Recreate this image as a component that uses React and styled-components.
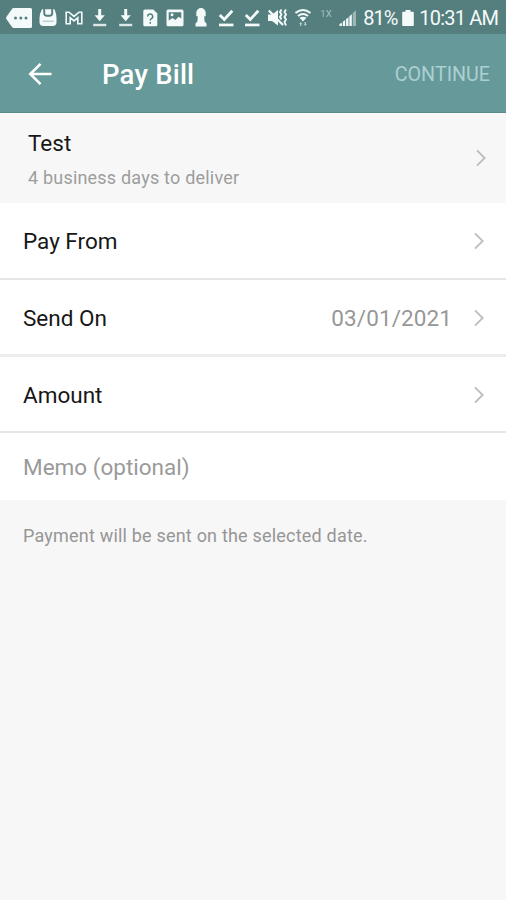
import React from 'react';
import styled, { createGlobalStyle } from 'styled-components';


const GlobalStyle = createGlobalStyle`
  body {
    margin: 0;
    font-family: Roboto, "Liberation Sans", sans-serif;
    background: #f7f7f7;
  }
`;

const Screen = styled("div")`
  display: flex;
  flex-direction: column;
  height: 900px;
  overflow: hidden;
  background: #f7f7f7;
  white-space: nowrap;
`;

const StatusBar = styled("div")`
  display: flex;
  align-items: center;
  box-sizing: border-box;
  height: 34px;
  padding: 1px 0 0 6px;
  color: #f4fafa;
  background: #547f7e;
`;

const Notifications = styled("div")`
  display: flex;
  align-items: center;
  gap: 7.4px;
`;

const Icon = styled("svg")`
  display: block;
  flex: none;
  width: ${(p) => p.$w || 18}px;
  height: ${(p) => p.$h || 20}px;
  margin-left: ${(p) => p.$left || 0}px;
  fill: currentColor;
`;

const Network = styled("span")`
  width: 12px;
  margin: 0 7px 9px 7px;
  font-size: 9.5px;
  line-height: 11px;
  color: #a9c3c3;
`;

const StatusText = styled("span")`
  flex: none;
  width: ${(p) => p.$width}px;
  margin: 1px 0 0 ${(p) => p.$left}px;
  font-size: 20px;
  line-height: 24px;
  letter-spacing: ${(p) => p.$spacing || 0}px;
`;

const Header = styled("div")`
  display: flex;
  align-items: center;
  box-sizing: border-box;
  height: 79px;
  padding: 1px 16px 0 28px;
  border-bottom: 1px solid #5a8c8b;
  background: #669999;
`;

const Title = styled("h1")`
  flex: 1;
  margin: 3px 0 0 50px;
  font-size: 27.5px;
  font-weight: 500;
  line-height: 32px;
  letter-spacing: 0.2px;
  color: #fff;
`;

const Continue = styled("span")`
  margin-top: 3px;
  font-size: 19.7px;
  line-height: 24px;
  color: #acd0d1;
`;

const Payee = styled("div")`
  display: flex;
  align-items: center;
  justify-content: space-between;
  box-sizing: border-box;
  height: 90px;
  padding: 0 20px 0 28px;
`;

const Label = styled("div")`
  flex: 1;
  font-size: 22.5px;
  line-height: 28px;
  color: ${(p) => (p.$muted ? '#9a9a9a' : '#171717')};
`;

const Delivery = styled("div")`
  margin-top: 9px;
  padding-top: 1px;
  font-size: 18px;
  line-height: 21px;
  letter-spacing: 0.2px;
  color: #9d9d9d;
`;

const Row = styled("div")`
  display: flex;
  align-items: center;
  box-sizing: border-box;
  height: ${(p) => p.$height}px;
  padding: ${(p) => p.$top || 0}px 22px 0 23px;
  border-bottom: ${(p) => p.$line || 0}px solid ${(p) => (p.$line > 2 ? '#ededed' : '#e6e6e6')};
  background: #fff;
`;

const Value = styled("span")`
  margin-right: 22px;
  font-size: 22.5px;
  line-height: 28px;
  letter-spacing: 0.1px;
  color: #979797;
`;

const Note = styled("p")`
  margin: 25px 0 0 23px;
  font-size: 18px;
  line-height: 22px;
  letter-spacing: 0.2px;
  color: #969696;
`;

const Download = () => (
  <Icon viewBox="0 0 18 20">
    <path d="M8.200 1h3v6.300h3.600L9.700 13.200 4.600 7.300h3.600z" />
    <path d="M3.200 15.800h13v2.400h-13z" opacity="0.85" />
  </Icon>
);

const Check = () => (
  <Icon viewBox="0 0 18 20">
    <path d="M2.800 7l4.500 4.500L15.300 2.700" fill="none" stroke="currentColor" strokeWidth="2.800" />
    <path d="M2 15.600h14.500V18.300H2z" />
  </Icon>
);

const Chevron = () => (
  <Icon $w={10} $h={18} viewBox="0 0 10 18">
    <path d="M1 1.300l7.700 7.700L1 16.700" fill="none" stroke="#bdbdbd" strokeWidth="1.900" />
  </Icon>
);

const App = () => {
    return (
        <Screen>
      <GlobalStyle />
      <StatusBar>
        <Notifications>
          <Icon $w={26} viewBox="0 0 26 20">
            <path d="M8 0h16.500Q26 0 26 1.500v17q0 1.500-1.500 1.500H8Q6.500 20 5.800 18.800L.5 11.200q-.8-1.200 0-2.400L5.800 1.200Q6.500 0 8 0z" />
            <g fill="#547f7e">
              <circle cx="9.500" cy="10" r="1.500" />
              <circle cx="14.800" cy="10" r="1.500" />
              <circle cx="20" cy="10" r="1.500" />
            </g>
          </Icon>
          <Icon viewBox="0 0 18 20">
            <path d="M3 1.300h12.500Q17.500 6 17.500 10v4q0 4-4 4h-9q-4 0-4-4v-4Q.5 6 3 1.300z" />
            <path d="M5.200 0v5q0 2.800 2.800 2.800h2.400q2.800 0 2.800-2.800V0" fill="none" stroke="#547f7e" strokeWidth="1.900" />
            <path d="M3.800 13.200h11" stroke="#547f7e" strokeWidth="1" opacity="0.5" />
          </Icon>
          <Icon viewBox="0 0 18 20">
            <path d="M1.200 4.200H4l5 4.200 5-4.200h2.800v11.600h-4V9.700L9 12.900 5.200 9.700v6.100h-4z" fill="none" stroke="currentColor" strokeWidth="1.600" />
          </Icon>
          <Download />
          <Download />
          <Icon viewBox="0 0 18 20">
            <path d="M4 1.500h8.300L16.300 5.500v11.300q0 1.500-1.500 1.500H4q-1.700 0-1.700-1.500V3Q2.300 1.500 4 1.500z" />
            <path d="M6.700 8.500a2.500 2.500 0 1 1 3.600 2.200q-1 .6-1 1.700M9.300 14v1.700" fill="none" stroke="#547f7e" strokeWidth="1.500" />
          </Icon>
          <Icon viewBox="0 0 18 20">
            <path fillRule="evenodd" d="M2 1.500h14q1.500 0 1.500 1.500v13.800q0 1.500-1.500 1.500H2q-1.500 0-1.500-1.500V3Q.5 1.500 2 1.500zM2.700 4.200v8.300l3.800-2.500 3 2 3-3.300 2.800 1.800V4.200z" />
            <circle cx="6" cy="6.800" r="1.500" />
          </Icon>
          <Icon viewBox="0 0 18 20">
            <path d="M9 0a4.700 4.700 0 0 1 4.700 4.700v3.500h-1.500l.4 5.300 1.900 2v3H3.500v-3l1.900-2 .4-5.300H4.300V4.700A4.700 4.700 0 0 1 9 0z" />
          </Icon>
          <Check />
          <Check />
          <Icon $w={20} viewBox="0 0 20 20">
            <path d="M0 6.500h4L10 2v15.500L4 13H0z" />
            <path d="M.8 2.500L15 17" fill="none" stroke="currentColor" strokeWidth="2.200" />
            <path d="M13.500 1.500L12 4l1.500 2.500L12 9l1.500 2.500M18 1.500L16.500 4 18 6.500 16.500 9l1.500 2.500-1.500 2.500 1.500 3.500" fill="none" stroke="currentColor" strokeWidth="1.900" />
          </Icon>
          <Icon viewBox="0 0 18 20">
            <g transform="translate(-1 0)">
              <path d="M1.500 5q7.500-6 15 0M4 8q5-4 10 0" fill="none" stroke="currentColor" strokeWidth="2" />
              <path d="M5.500 9.800q3.500-2.300 7 0L9 13.500z" />
              <path d="M5 16l1.700-2 1.700 2H7.400v2H6v-2zM9.600 16h1v-2h1.400v2h1l-1.700 2z" opacity="0.6" />
            </g>
          </Icon>
        </Notifications>
        <Network>1X</Network>
        <Icon viewBox="0 0 18 20">
          <path d="M.5 18v-2l2.400-1.200V18zM3.800 18v-4.300l2.400-1.800V18zM7.100 18v-7l2.400-1.800V18zM10.400 18V8.200l2.400-1.900V18z" />
          <path d="M13.700 18V5l3.300-2.800V18z" opacity="0.450" />
        </Icon>
        <StatusText $left={6} $width={35} $spacing={-1}>81%</StatusText>
        <Icon $w={12} $left={4} viewBox="0 0 12 20">
          <path d="M3.500 2h5v1.700H11q.8 0 .8.800V17.200q0 .8-.8.800H1q-.8 0-.8-.8V4.500q0-.8.800-.8h2.500z" />
        </Icon>
        <StatusText $left={5} $width={80} $spacing={-0.8}>10:31 AM</StatusText>
      </StatusBar>
      <Header>
        <Icon $w={24} $h={24} viewBox="0 0 24 24">
          <path d="M23.500 12H2.500M12.500 1.800L2.300 12l10.200 10.200" fill="none" stroke="#fff" strokeWidth="2.600" />
        </Icon>
        <Title>Pay Bill</Title>
        <Continue>CONTINUE</Continue>
      </Header>
      <Payee>
        <div>
          <Label>Test</Label>
          <Delivery>4 business days to deliver</Delivery>
        </div>
        <Chevron />
      </Payee>
      <Row $height={77} $line={2}>
        <Label>Pay From</Label>
        <Chevron />
      </Row>
      <Row $height={77} $line={3} $top={2}>
        <Label>Send On</Label>
        <Value>03/01/2021</Value>
        <Chevron />
      </Row>
      <Row $height={76} $line={2} $top={1}>
        <Label>Amount</Label>
        <Chevron />
      </Row>
      <Row $height={67}>
        <Label $muted>Memo (optional)</Label>
      </Row>
      <Note>Payment will be sent on the selected date.</Note>
    </Screen>
    );
};

export default App;
